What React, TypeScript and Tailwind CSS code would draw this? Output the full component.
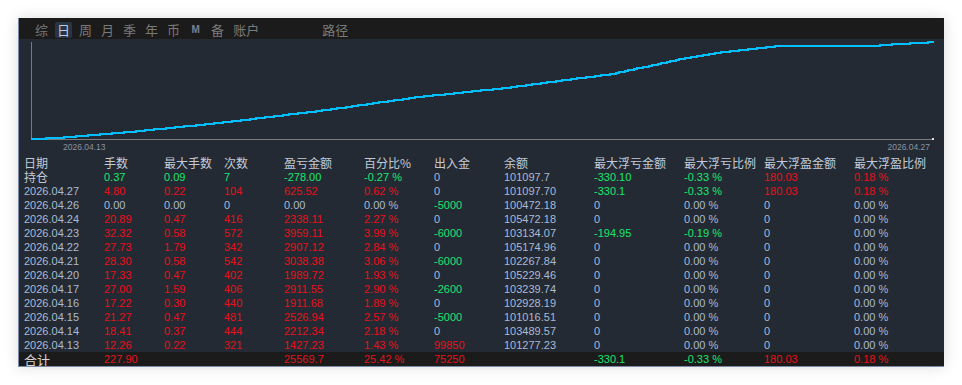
import React from 'react'

const CJK = "font-['Noto_Sans_CJK_SC','Liberation_Sans',sans-serif]"
const NUM = "font-['Liberation_Sans','Noto_Sans_CJK_SC',sans-serif]"

const COLS =
  'grid grid-cols-[80px_60px_60px_60px_80px_70px_70px_90px_90px_80px_90px_1fr] pl-[5px] h-[14px] leading-[14px] whitespace-nowrap'

const COLOR: Record<string, string> = {
  r: 'text-[#e8101a]',
  g: 'text-[#14e66e]',
  n: 'text-[#a9bad3]',
}

const HEAD = ['日期', '手数', '最大手数', '次数', '盈亏金额', '百分比%', '出入金', '余额', '最大浮亏金额', '最大浮亏比例', '最大浮盈金额', '最大浮盈比例']

const ROWS: [string, string[], string][] = [
  ['2026.04.27', ['4.80', '0.22', '104', '625.52', '0.62 %', '0', '101097.70', '-330.1', '-0.33 %', '180.03', '0.18 %'], 'rrrrrnnggrr'],
  ['2026.04.26', ['0.00', '0.00', '0', '0.00', '0.00 %', '-5000', '100472.18', '0', '0.00 %', '0', '0.00 %'], 'nnnnngnnnnn'],
  ['2026.04.24', ['20.89', '0.47', '416', '2338.11', '2.27 %', '0', '105472.18', '0', '0.00 %', '0', '0.00 %'], 'rrrrrnnnnnn'],
  ['2026.04.23', ['32.32', '0.58', '572', '3959.11', '3.99 %', '-6000', '103134.07', '-194.95', '-0.19 %', '0', '0.00 %'], 'rrrrrgnggnn'],
  ['2026.04.22', ['27.73', '1.79', '342', '2907.12', '2.84 %', '0', '105174.96', '0', '0.00 %', '0', '0.00 %'], 'rrrrrnnnnnn'],
  ['2026.04.21', ['28.30', '0.58', '542', '3038.38', '3.06 %', '-6000', '102267.84', '0', '0.00 %', '0', '0.00 %'], 'rrrrrgnnnnn'],
  ['2026.04.20', ['17.33', '0.47', '402', '1989.72', '1.93 %', '0', '105229.46', '0', '0.00 %', '0', '0.00 %'], 'rrrrrnnnnnn'],
  ['2026.04.17', ['27.00', '1.59', '406', '2911.55', '2.90 %', '-2600', '103239.74', '0', '0.00 %', '0', '0.00 %'], 'rrrrrgnnnnn'],
  ['2026.04.16', ['17.22', '0.30', '440', '1911.68', '1.89 %', '0', '102928.19', '0', '0.00 %', '0', '0.00 %'], 'rrrrrnnnnnn'],
  ['2026.04.15', ['21.27', '0.47', '481', '2526.94', '2.57 %', '-5000', '101016.51', '0', '0.00 %', '0', '0.00 %'], 'rrrrrgnnnnn'],
  ['2026.04.14', ['18.41', '0.37', '444', '2212.34', '2.18 %', '0', '103489.57', '0', '0.00 %', '0', '0.00 %'], 'rrrrrnnnnnn'],
  ['2026.04.13', ['12.26', '0.22', '321', '1427.23', '1.43 %', '99850', '101277.23', '0', '0.00 %', '0', '0.00 %'], 'rrrrrrnnnnn'],
]

const HOLD = ['0.37', '0.09', '7', '-278.00', '-0.27 %', '0', '101097.7', '-330.10', '-0.33 %', '180.03', '0.18 %']
const TOTAL = ['227.90', '', '', '25569.7', '25.42 %', '75250', '', '-330.1', '-0.33 %', '180.03', '0.18 %']

// equity curve anchors, page pixels
const ANCHORS = [
  [31, 139], [55, 138], [118, 133], [218, 123], [318, 111], [418, 97], [505, 88], [611, 74],
  [681, 59], [716, 53], [751, 49], [778, 46], [871, 46], [896, 44], [920, 43], [934, 42],
]

function yAt(x: number) {
  for (let i = 1; i < ANCHORS.length; i++) {
    const [x0, y0] = ANCHORS[i - 1]
    const [x1, y1] = ANCHORS[i]
    if (x <= x1) return y0 + ((y1 - y0) * (x - x0)) / (x1 - x0)
  }
  return ANCHORS[ANCHORS.length - 1][1]
}

function stepPath() {
  let d = 'M12 100'
  let last = 100
  for (let x = 31; x <= 934; x += 3) {
    const y = Math.round(yAt(x)) - 39
    if (y !== last) {
      d += ` H${x - 19} V${y}`
      last = y
    }
  }
  return d + ' H915'
}

const TABS = ['综', '日', '周', '月', '季', '年', '币']

function Cells({ vals, colors }: { vals: string[]; colors: string }) {
  return (
    <>
      {vals.map((v, i) => (
        <span key={i} className={`${COLOR[colors[i]]} text-[11px] ${NUM}`}>
          {v}
        </span>
      ))}
    </>
  )
}

export default function App() {
  return (
    <div className="w-[962px] h-[385px] bg-white pt-[18px] pl-[18px]">
      <div className="w-[926px] bg-[#242a33] border-l border-b border-[#7a8aa6] shadow-[0_0_14px_rgba(0,0,0,0.14)]">
        {/* tabs */}
        <div className={`h-[21px] bg-[#1b1b1b] flex items-start pt-[4px] pl-[14px] gap-[5px] text-[13px] leading-[16px] text-[#7a7a7a] ${CJK}`}>
          {TABS.map((t) => (
            <span key={t} className={t === '日' ? 'px-[2px] bg-[#2a3442] rounded-[2px] text-[#b8cce8]' : 'px-[2px]'}>
              {t}
            </span>
          ))}
          <span className={`w-[17px] text-center text-[10px] font-bold text-[#7d7f94] ${NUM}`}>M</span>
          <span className="px-[2px]">备</span>
          <span className="px-[2px]">账户</span>
          <span className="px-[2px] ml-[54px]">路径</span>
        </div>

        {/* chart */}
        <svg width="925" height="117" className={`block ${NUM}`}>
          <line x1="12.5" y1="3" x2="12.5" y2="100" stroke="#7a7a7a" strokeWidth="1" />
          <line x1="12" y1="100.5" x2="915" y2="100.5" stroke="#7a7a7a" strokeWidth="1" />
          <rect x="913" y="99" width="2" height="2" fill="#e0e0e0" />
          <path d={stepPath()} fill="none" stroke="#00bfff" strokeWidth="2" shapeRendering="crispEdges" />
          <text x="44" y="111" fontSize="8.5" fill="#8893a0">2026.04.13</text>
          <text x="911" y="111" fontSize="8.5" fill="#8893a0" textAnchor="end">2026.04.27</text>
        </svg>

        {/* table */}
        <div>
          <div className={`${COLS} text-[12px] text-[#c3cad6] ${CJK}`}>
            {HEAD.map((h) => (
              <span key={h}>{h}</span>
            ))}
          </div>
          <div className={COLS}>
            <span className={`text-[12px] text-[#c3cad6] ${CJK}`}>持仓</span>
            <Cells vals={HOLD} colors="gggggnnggrr" />
          </div>
          {ROWS.map(([date, vals, colors]) => (
            <div key={date} className={COLS}>
              <span className={`text-[11px] text-[#a9bad3] ${NUM}`}>{date}</span>
              <Cells vals={vals} colors={colors} />
            </div>
          ))}
          <div className={`${COLS} bg-[#1b1b1b] overflow-hidden`}>
            <span className={`text-[13px] leading-[16px] text-[#d6d6d6] ${CJK}`}>合计</span>
            <Cells vals={TOTAL} colors="rnnrrrnggrr" />
          </div>
        </div>
      </div>
    </div>
  )
}
